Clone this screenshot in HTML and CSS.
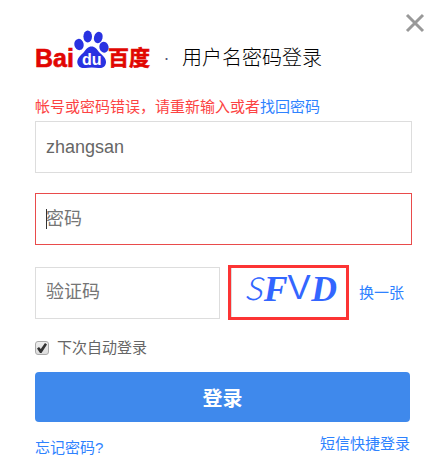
FILE: index.html
```html
<!DOCTYPE html>
<html lang="zh-CN">
  <head>
    <meta charset="UTF-8" />
    <meta name="viewport" content="width=device-width, initial-scale=1.0" />
    <title>用户名密码登录</title>
    <link rel="stylesheet" href="styles.css">
  </head>

  <body>
    <div class="login-box">
      <button type="button" class="close" aria-label="关闭">
        <svg width="20" height="20" viewBox="0 0 20 20">
          <path d="M2 2L18 18M18 2L2 18" />
        </svg>
      </button>

      <div class="login-header">
        <svg class="logo" width="116" height="42" viewBox="0 0 116 42">
          <text class="logo-red" x="0" y="37" font-size="25">Bai</text>
          <g class="logo-paw">
            <ellipse cx="44" cy="14.5" rx="4.7" ry="5.7" transform="rotate(-10 44 14.5)" />
            <ellipse cx="52.7" cy="6.5" rx="4.3" ry="6" />
            <ellipse cx="63.3" cy="7.5" rx="4.3" ry="5.8" transform="rotate(15 63.3 7.5)" />
            <ellipse cx="69" cy="17.2" rx="4.6" ry="5.5" transform="rotate(-15 69 17.2)" />
            <path d="M56.5 16.5C60 16.5 62 19 64 22C67 25 71.5 28 71 32.5C70.6 37 67 38.6 63.5 38C59 37.3 54.5 37.3 50.5 38C46 38.6 42.8 36.5 42.3 32.5C42 28 46 25 49 22C51 19 53 16.5 56.5 16.5Z" />
          </g>
          <text class="logo-du" x="47" y="35" font-size="16">du</text>
          <text class="logo-red" x="73" y="35" font-size="21">百度</text>
        </svg>
        <span class="dot">·</span>
        <h1>用户名密码登录</h1>
      </div>

      <form class="login-form">
        <p class="error">帐号或密码错误，请重新输入或者<a href="#">找回密码</a></p>

        <div class="field">
          <input type="text" name="userName" value="zhangsan" aria-label="用户名" />
        </div>

        <div class="field active">
          <input type="password" name="password" placeholder="密码" aria-label="密码" />
        </div>

        <div class="verify">
          <input type="text" name="verifyCode" placeholder="验证码" aria-label="验证码" />
          <div class="captcha">
            <svg width="115" height="49" viewBox="0 0 115 49">
              <text class="slant" x="12" y="32" font-size="31">S</text>
              <text class="serif" x="32" y="33" font-size="36">F</text>
              <text class="sans" x="56" y="31" font-size="35">V</text>
              <text class="serif" x="80" y="33" font-size="36">D</text>
            </svg>
          </div>
          <a href="#">换一张</a>
        </div>

        <label class="remember">
          <input type="checkbox" name="remember" checked />
          下次自动登录
        </label>

        <button type="submit" class="submit">登录</button>
      </form>

      <div class="login-footer">
        <a href="#" class="forget">忘记密码?</a>
        <a href="#">短信快捷登录</a>
      </div>
    </div>
  </body>
</html>
```

FILE: styles.css
```css
* {
  margin: 0;
  padding: 0;
  box-sizing: border-box;
}

body {
  font-family: "Liberation Sans", "Noto Sans CJK SC", sans-serif;
  font-size: 15px;
  line-height: 20px;
  background-color: #ffffff;
  color: #666666;
}

a {
  color: #2e82ff;
  text-decoration: none;
}

.login-box {
  position: relative;
  padding: 30px 29px 16px 35px;
}

.close {
  position: absolute;
  top: 13px;
  right: 16px;
  width: 20px;
  height: 20px;
  border: none;
  background: none;
  cursor: pointer;
}

.close svg {
  display: block;
  fill: none;
  stroke: #999999;
  stroke-width: 3;
}

.login-header {
  display: flex;
  align-items: center;
  height: 42px;
}

.logo {
  font-weight: bold;
  overflow: visible;
}

.logo-red {
  fill: #e10602;
  stroke: #e10602;
  stroke-width: 0.6;
}

.logo-paw {
  fill: #2932e1;
}

.logo-du {
  fill: #ffffff;
}

.dot {
  width: 31px;
  padding-top: 14px;
  text-align: center;
  font-size: 18px;
  line-height: 24px;
  color: #555577;
}

h1 {
  padding-top: 14px;
  font-size: 20px;
  font-weight: 300;
  line-height: 28px;
  color: #000000;
}

.error {
  margin-top: 25px;
  margin-bottom: 4px;
  color: #fc4343;
}

.field {
  position: relative;
  margin-bottom: 20px;
}

.field input,
.verify input {
  display: block;
  width: 100%;
  height: 52px;
  padding: 0 10px;
  border: 1px solid #dddddd;
  border-radius: 0;
  outline: none;
  font-family: inherit;
  font-size: 18px;
  color: #666666;
}

input::placeholder {
  color: #757575;
  opacity: 1;
}

.active input {
  border-color: #e94b4b;
}

/* text cursor */
.active::before {
  content: "";
  position: absolute;
  top: 16px;
  left: 11px;
  width: 1px;
  height: 20px;
  background-color: #333333;
}

.verify {
  display: flex;
  align-items: center;
}

.verify input {
  flex: 1;
  min-width: 0;
}

.captcha {
  width: 121px;
  height: 55px;
  margin-left: 8px;
  margin-right: 10px;
  border: 3px solid #fc3434;
}

.captcha svg {
  display: block;
  overflow: visible;
  border-left: 1px solid #dddddd;
  fill: #3366ff;
}

.captcha .slant {
  font-family: "Noto Sans CJK SC", sans-serif;
  font-style: italic;
  font-weight: 300;
}

.captcha .sans {
  font-family: "Liberation Sans", sans-serif;
}

.captcha .serif {
  font-family: "Liberation Serif", serif;
  font-style: italic;
  font-weight: bold;
}

.verify a {
  margin-right: 8px;
}

.remember {
  display: flex;
  align-items: center;
  margin-top: 18px;
  margin-bottom: 14px;
}

.remember input {
  appearance: none;
  width: 14px;
  height: 14px;
  margin-right: 8px;
  border: 1px solid #aaaaaa;
  border-radius: 3px;
  background: linear-gradient(#eeeeee, #dddddd);
}

.remember input:checked::before {
  content: "";
  display: block;
  width: 10px;
  height: 10px;
  margin: 1px;
  background-color: #333333;
  clip-path: polygon(0 55%, 20% 40%, 38% 60%, 80% 0, 100% 15%, 45% 100%, 30% 100%);
}

.submit {
  display: block;
  width: calc(100% - 2px);
  height: 50px;
  border: none;
  border-radius: 4px;
  background-color: #3f89ec;
  color: #ffffff;
  font-family: inherit;
  font-size: 20px;
  font-weight: bold;
  cursor: pointer;
}

.login-footer {
  display: flex;
  justify-content: space-between;
  padding-right: 2px;
  margin-top: 12px;
}

.forget {
  margin-top: 4px;
}
```
